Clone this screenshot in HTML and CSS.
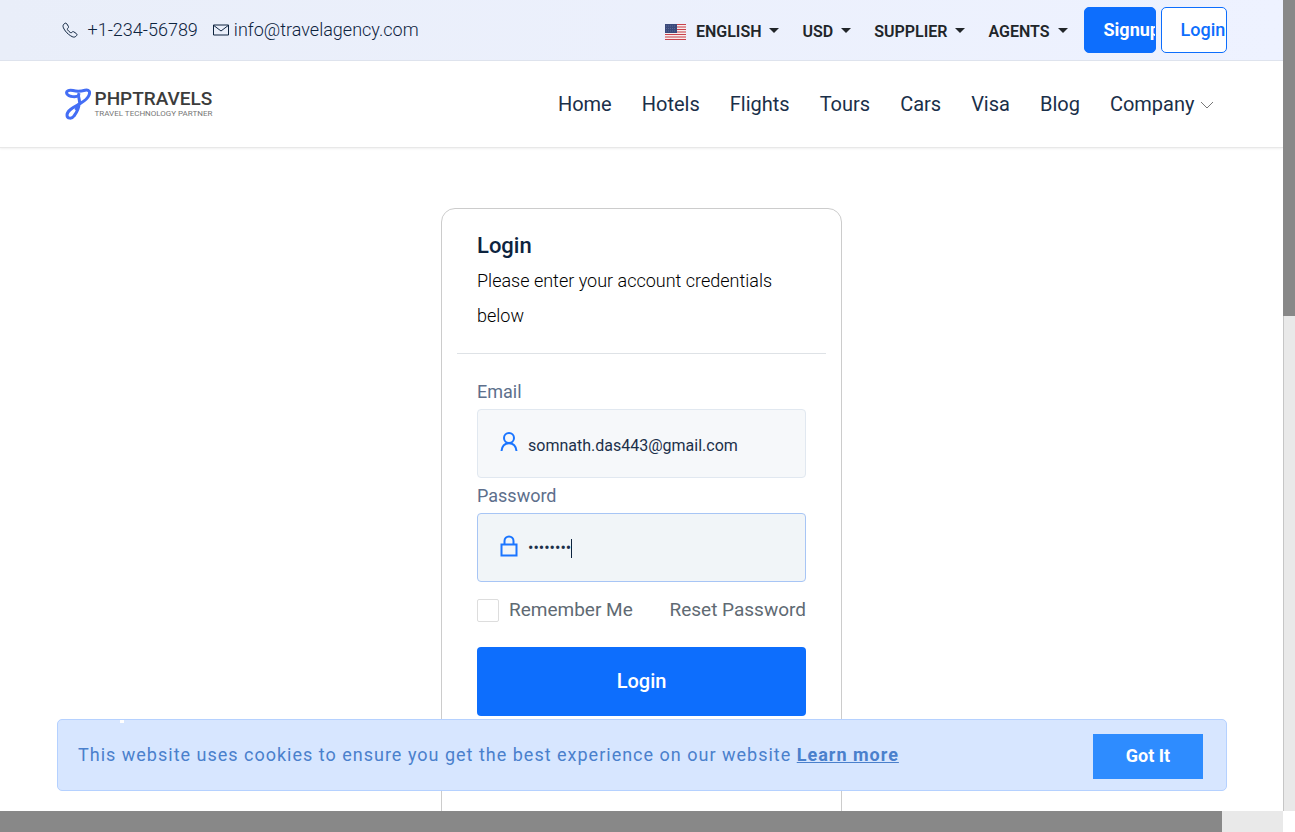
FILE: index.html
```html
<!DOCTYPE html>
<html lang="en">
<head>
<meta charset="utf-8">
<title>Login - PHPTRAVELS</title>
<link rel="stylesheet" href="styles.css">
</head>
<body>
<div class="window">
  <div class="page">
    <div class="topbar">
      <div class="container topbar-row">
        <ul class="contact">
          <li><a class="contact-link contact-phone" href="#"><svg class="contact-icon" viewBox="0 0 16 16" aria-hidden="true"><path d="M1.4 2.8C2.6 1 3.9.6 4.7 1.7L6.3 4.2c.5.9.2 1.5-.7 2.3-.5.5-.3.9.1 1.5.8 1.1 1.6 1.9 2.6 2.5.6.4 1 .4 1.5-.1.7-.8 1.3-1 2.1-.5l2.5 1.7c1 .8.7 1.7-.7 2.9-1.3 1-2.8.8-5.2-.8C6 12.200 3.600 9.700 2.100 7.100 1 5.200.700 3.900 1.400 2.800Z"/></svg>+1-234-56789</a></li>
          <li><a class="contact-link contact-mail" href="#"><svg class="contact-icon" viewBox="0 0 16 16" aria-hidden="true"><path d="M.5 3h15v10H.5ZM.8 3.500 8 9l7.200-5.500"/></svg>info@travelagency.com</a></li>
        </ul>
        <div class="tools">
          <button class="drop" type="button"><svg class="flag" viewBox="0 0 21 16" aria-hidden="true"><rect width="21" height="16" fill="#f7eded"/><path d="M0 .500h21M0 3h21M0 5.500h21M0 8h21M0 10.500h21M0 13h21M0 15.500h21" stroke="#c8414b" stroke-width="1.200"/><rect width="12" height="9" fill="#3b4a7c"/><path d="M1 2h10M1 4.500h10M1 7h10" stroke="#7480a6" stroke-width=".6" stroke-dasharray="1 1"/></svg>ENGLISH</button>
          <button class="drop" type="button">USD</button>
          <button class="drop" type="button">SUPPLIER</button>
          <button class="drop" type="button">AGENTS</button>
          <div class="auth">
            <a class="auth-btn auth-signup" href="#">Signup</a>
            <a class="auth-btn auth-login" href="#">Login</a>
          </div>
        </div>
      </div>
    </div>
    <header class="header">
      <div class="container header-row">
        <a class="logo" href="#">
          <svg class="logo-mark" viewBox="0 0 26 32" aria-hidden="true"><path d="M14 7.500C11 9.500 4 9 2 6 .5 3 4 1.500 8 2.500c4 1 9 .500 12-.300 4-1 5.500 1.500 4 5-2 5-7 7-11 9.500C7 20 2 23 2 27c0 4 5 4 7 1 3-4 5-8 5-12"/><path class="logo-stem" d="M14 5c-1.500 4 1 6 .5 10-.5 3-2 4.500-4 7"/></svg>
          <span class="logo-words"><span class="logo-name">PHPTRAVELS</span><span class="logo-tag">TRAVEL TECHNOLOGY PARTNER</span></span>
        </a>
        <nav class="nav">
          <a class="nav-link" href="#">Home</a>
          <a class="nav-link" href="#">Hotels</a>
          <a class="nav-link" href="#">Flights</a>
          <a class="nav-link" href="#">Tours</a>
          <a class="nav-link" href="#">Cars</a>
          <a class="nav-link" href="#">Visa</a>
          <a class="nav-link" href="#">Blog</a>
          <a class="nav-link" href="#">Company<svg class="chevron" viewBox="0 0 14 14" aria-hidden="true"><path d="m1 5 6 6 6-6"/></svg></a>
        </nav>
      </div>
    </header>
    <main class="main">
      <section class="card">
        <div class="card-head">
          <h1 class="card-title">Login</h1>
          <p class="card-text">Please enter your account credentials below</p>
        </div>
        <form class="form">
          <label class="label" for="email">Email</label>
          <div class="field">
            <svg class="field-icon" viewBox="0 0 18 22" aria-hidden="true"><circle cx="9" cy="7" r="5"/><path d="M1.500 20C2 15 5 12.200 9 12.200s7 2.800 7.500 7.800"/></svg>
            <input class="input" id="email" type="email" value="somnath.das443@gmail.com">
          </div>
          <label class="label" for="password">Password</label>
          <div class="field field-active">
            <svg class="field-icon" viewBox="0 0 18 22" aria-hidden="true"><path d="M1.500 9.500h15v11h-15ZM4.500 9.500V6a4.500 4.500 0 0 1 9 0v3.500"/></svg>
            <input class="input input-secret" id="password" type="password" value="password">
            <span class="caret"></span>
          </div>
          <div class="options">
            <label class="remember" for="remember"><input class="check" id="remember" type="checkbox">Remember Me</label>
            <a class="reset" href="#">Reset Password</a>
          </div>
          <button class="submit" type="button">Login</button>
        </form>
      </section>
    </main>
    <div class="cookie">
      <p class="cookie-text">This website uses cookies to ensure you get the best experience on our website <a class="cookie-link" href="#">Learn more</a></p>
      <button class="cookie-btn" type="button">Got It</button>
      <span class="cookie-mark"></span>
    </div>
  </div>
  <div class="track track-y"><div class="thumb thumb-y"></div></div>
  <div class="track track-x"><div class="thumb thumb-x"></div></div>
</div>
</body>
</html>
```

FILE: styles.css
```css
* { box-sizing: border-box; }
body {
  margin: 0;
  font-family: Roboto, "Liberation Sans", sans-serif;
  font-size: 18px;
  color: #0d233e;
  background: #fff;
}
a { color: inherit; text-decoration: none; }
button, input { font-family: inherit; }
svg { flex: none; fill: none; stroke: currentColor; }

.window {
  display: grid;
  grid-template-columns: minmax(0, 1fr) 12px;
  grid-template-rows: minmax(0, 1fr) 21px;
  height: 100vh;
}
.page { position: relative; overflow: hidden; }
.container { max-width: 1170px; margin: 0 auto; }

/* Top bar */
.topbar {
  background: linear-gradient(90deg, #e9eef9, #eef2ff);
  border-bottom: 1px solid #dde2ed;
}
.topbar-row { display: flex; align-items: center; justify-content: space-between; height: 60px; }
.contact { display: flex; gap: 15px; margin: 0; padding: 0 0 0 5px; list-style: none; }
.contact-link { display: flex; align-items: center; line-height: 24px; font-weight: 300; }
.contact-phone { gap: 10px; }
.contact-mail { gap: 5px; }
.contact-icon { width: 16px; height: 16px; }
.tools { display: flex; align-items: center; gap: 23px; }
.drop {
  display: flex;
  align-items: center;
  gap: 8px;
  padding: 3px 0 0;
  border: 0;
  background: none;
  color: #212529;
  font-size: 16px;
  font-weight: 600;
  line-height: 24px;
}
.drop::after {
  content: "";
  margin-bottom: 3px;
  border: 5px solid transparent;
  border-top-color: #212529;
  border-bottom: 0;
}
.flag { width: 21px; height: 16px; margin-right: 2px; stroke: none; }
.auth { display: flex; gap: 5px; margin-left: -7px; }
.auth-btn {
  height: 46px;
  padding-left: 19px;
  overflow: hidden;
  border: 1px solid #0d6efd;
  border-radius: 5px;
  font-weight: 500;
  line-height: 44px;
  white-space: nowrap;
}
.auth-signup { width: 72px; background: #0d6efd; color: #fff; font-weight: 700; }
.auth-login { width: 66px; background: #fff; color: #0d6efd; }

/* Header */
.header { border-bottom: 1px solid #e8e8e8; box-shadow: 0 1px 2px #f1f1f1; }
.header-row { display: flex; align-items: center; justify-content: space-between; height: 86px; padding: 0 13px 0 8px; }
.logo { display: flex; align-items: center; gap: 4px; }
.logo-mark { width: 26px; height: 32px; color: #446ef5; stroke-width: 3; }
.logo-stem { stroke-width: 3; }
.logo-words { display: flex; flex-direction: column; }
.logo-name { color: #3c3c3c; font-size: 19px; font-weight: 500; line-height: 19px; }
.logo-tag { color: #777; font-size: 8px; line-height: 11px; }
.nav { display: flex; gap: 30px; }
.nav-link { display: flex; align-items: center; gap: 5px; color: #1a2f49; font-size: 20px; line-height: 30px; }
.chevron { width: 14px; height: 14px; color: #777; }

/* Login card */
.main { display: flex; justify-content: center; padding-top: 60px; }
.card { width: 401px; height: 720px; flex: none; border: 1px solid #ccc; border-radius: 14px; }
.card-head { margin: 0 15px; padding: 20px; border-bottom: 1px solid #dee2e6; }
.card-title { margin: 0; font-size: 22px; font-weight: 500; line-height: 34px; }
.card-text { margin: 0; color: #000; font-weight: 300; line-height: 35px; }
.form { display: flex; flex-direction: column; padding: 23px 35px; }
.label { padding: 1px 0 4px; color: #5d6f8c; line-height: 27px; }
.field {
  position: relative;
  display: flex;
  align-items: center;
  gap: 10px;
  height: 69px;
  margin-bottom: 3px;
  padding: 0 22px;
  border: 1px solid #e1e8f0;
  border-radius: 4px;
  background: #f6f8fa;
}
.field-active { border-color: #a7c5f5; background: #f1f5f8; }
.field-icon { width: 18px; height: 22px; margin-bottom: 4px; color: #1a75ff; stroke-width: 2; }
.input {
  flex: 1;
  min-width: 0;
  height: 48px;
  padding: 4px 0 0;
  border: 0;
  outline: 0;
  background: none;
  color: #1c304a;
  font-size: 16px;
}
.input-secret { padding-top: 0; }
.caret { position: absolute; top: 25px; left: 93px; width: 1px; height: 19px; background: #0d233e; }
.options { display: flex; justify-content: space-between; padding-top: 11px; color: #606a73; font-size: 19px; line-height: 28px; }
.remember { display: flex; align-items: center; gap: 10px; }
.check {
  appearance: none;
  width: 22px;
  height: 23px;
  margin: 0;
  border: 1px solid #ddd;
  border-radius: 2px;
  background: #fff;
}
.submit {
  height: 69px;
  margin-top: 23px;
  padding-bottom: 3px;
  border: 0;
  border-radius: 4px;
  background: #0d6efd;
  color: #fff;
  font-size: 20px;
  font-weight: 500;
}

/* Cookie notice, pinned over the page */
.cookie {
  position: absolute;
  right: 56px;
  bottom: 20px;
  left: 57px;
  display: flex;
  align-items: center;
  justify-content: space-between;
  height: 72px;
  padding: 2px 23px 0 20px;
  border: 1px solid #b5d1ff;
  border-radius: 5px;
  background: #d7e6ff;
}
.cookie-text { margin: 0; padding-bottom: 4px; color: #4a80cc; letter-spacing: 1px; line-height: 27px; }
.cookie-link { font-weight: 700; text-decoration: underline; }
.cookie-btn { width: 110px; height: 45px; padding: 0 0 2px; border: 0; background: #2e8cff; color: #fff; font-size: 18px; font-weight: 700; }
.cookie-mark { position: absolute; top: 0; left: 62px; width: 4px; height: 3px; background: #fff; }

/* Scroll bars */
.track { background: #e9e9e9; }
.track-y { border-left: 1px solid #c6c6c6; }
.thumb { background: #888; }
.thumb-y { height: 39%; margin-left: -1px; }
.thumb-x { width: 95.25%; height: 100%; }
```
